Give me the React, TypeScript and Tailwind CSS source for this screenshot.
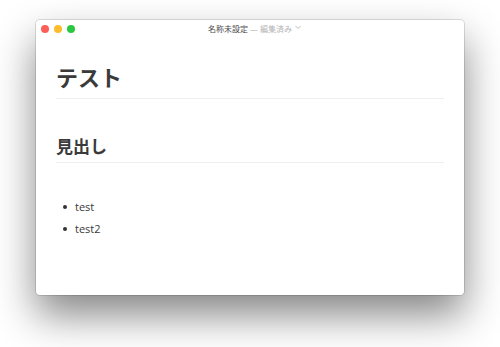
import React from 'react';

const FONT = '"Open Sans", "Noto Sans CJK JP", sans-serif';

const items = ['test', 'test2'];

export default function App() {
  return (
    <div className="w-[500px] h-[347px] bg-white pt-[20px] pl-[36px]" style={{ fontFamily: FONT }}>
      {/* Window */}
      <div className="w-[428px] h-[275px] bg-white rounded-[4px] flex flex-col shadow-[0_0_0_1px_rgba(0,0,0,0.12),0_20px_40px_rgba(0,0,0,0.48)]">
        {/* Title bar */}
        <div className="grid grid-cols-[1fr_auto_1fr] items-center h-[16px] px-[5px]">
          <div className="flex items-center gap-[5px] pt-[1px]">
            <span className="w-[8px] h-[8px] rounded-full bg-[#fc5f57]" />
            <span className="w-[8px] h-[8px] rounded-full bg-[#fdbc2e]" />
            <span className="w-[8px] h-[8px] rounded-full bg-[#29c840]" />
          </div>
          <div className="text-[8px] leading-none text-[#4a4a4a] whitespace-nowrap pt-[2px]">
            名称未設定 <span className="text-[#a8a8a8]">— </span>
            <span className="relative text-[#b4b4b4]">
              編集済み
              <svg className="absolute left-[calc(100%+3px)] top-[2px]" width="6" height="5" viewBox="0 0 6 5">
                <path d="M0.5 1 L3 3.5 L5.5 1" fill="none" stroke="#b4b4b4" strokeWidth="0.9" />
              </svg>
            </span>
          </div>
          <div />
        </div>

        {/* Document */}
        <div className="flex-1 px-[20px] pt-[27px] text-[#3a3a3a]">
          <h1 className="text-[22px] leading-[28px] font-bold pb-[7px] border-b border-[#eeeeee]">テスト</h1>
          <h2 className="mt-[37px] text-[17px] leading-[22px] font-bold pb-[4px] border-b border-[#eeeeee]">見出し</h2>
          <ul className="mt-[33px] flex flex-col">
            {items.map((t) => (
              <li key={t} className="flex items-center h-[22px] text-[11px] pl-[7px]">
                <span className="w-[4px] h-[4px] rounded-full bg-[#333] mr-[8px]" />
                {t}
              </li>
            ))}
          </ul>
        </div>
      </div>
    </div>
  );
}
